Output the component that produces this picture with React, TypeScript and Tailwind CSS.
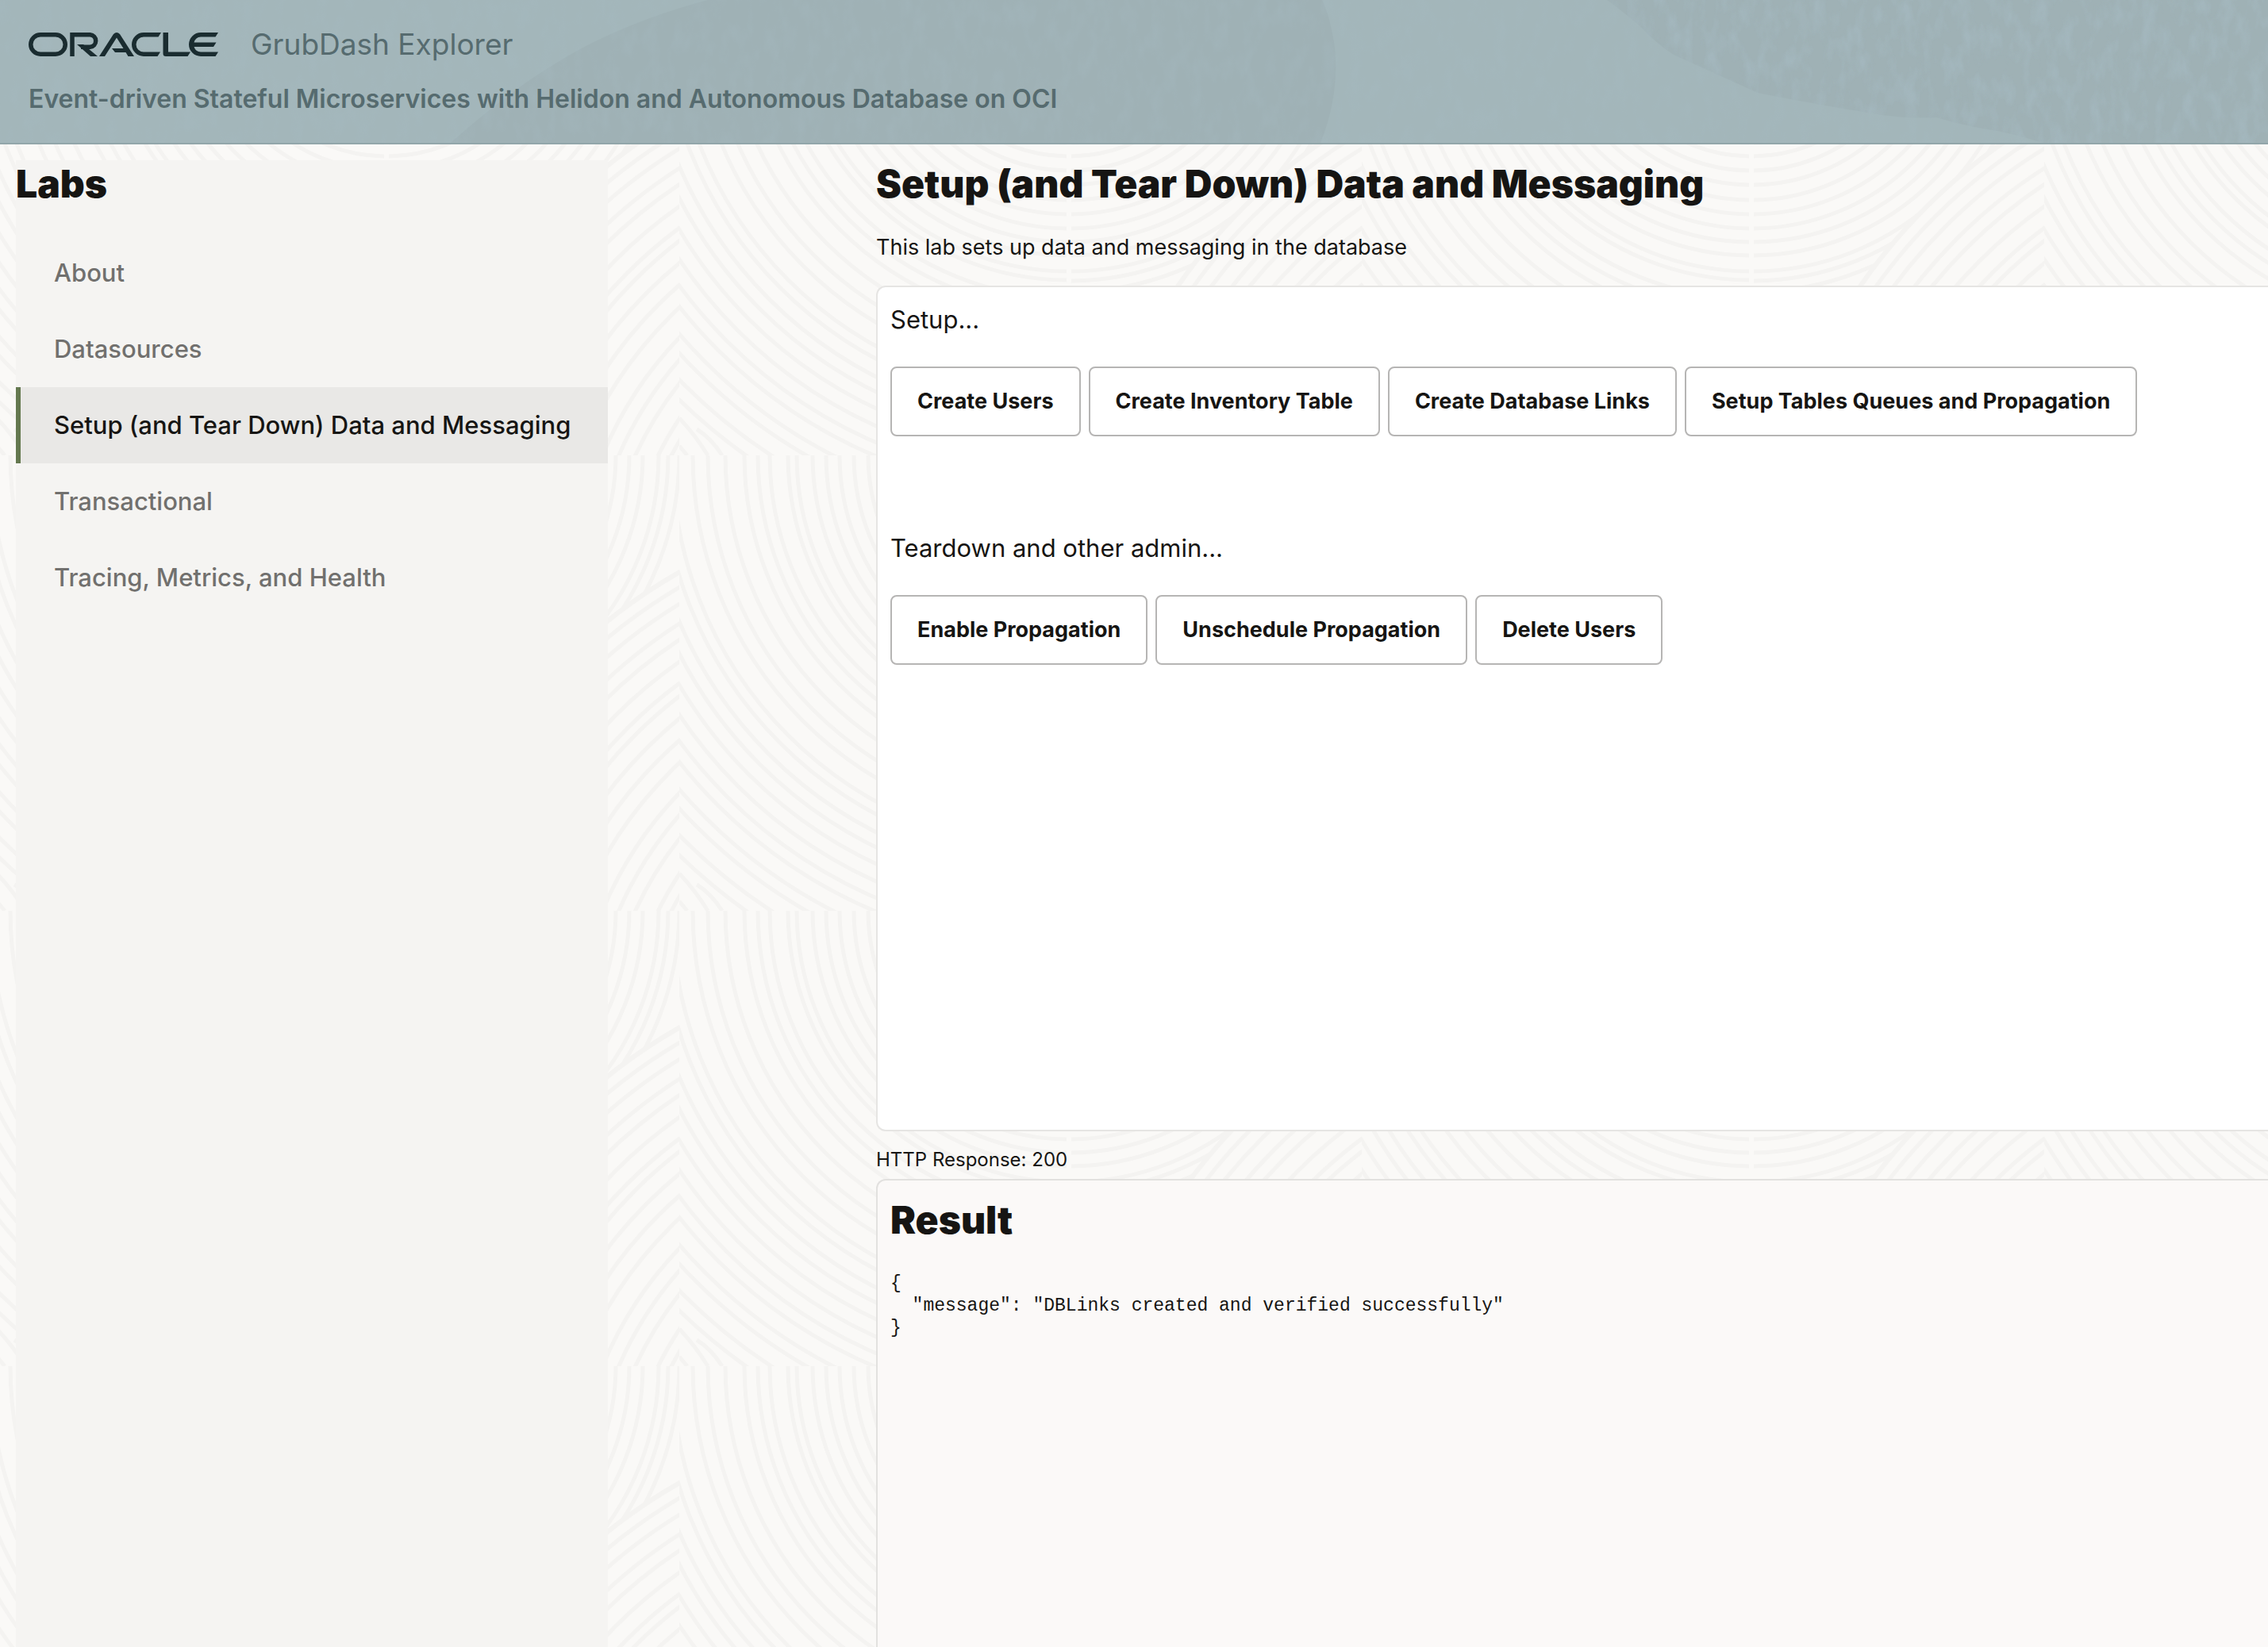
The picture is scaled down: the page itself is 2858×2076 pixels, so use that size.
import React from "react";

const labs = [
  "About",
  "Datasources",
  "Setup (and Tear Down) Data and Messaging",
  "Transactional",
  "Tracing, Metrics, and Health",
];
const activeLab = 2;

const setupActions = [
  "Create Users",
  "Create Inventory Table",
  "Create Database Links",
  "Setup Tables Queues and Propagation",
];
const teardownActions = ["Enable Propagation", "Unschedule Propagation", "Delete Users"];

const result = { message: "DBLinks created and verified successfully" };

// Ring radii around the bowl at (490, 0) of a pattern tile.
const bowlRings = [
  20, 38, 56, 74, 92, 110, 128, 146, 163, 180, 197, 215, 233, 252, 270, 288, 305, 322, 342,
];
const outerBowlRings = [
  353, 376, 391, 408, 432, 454, 473, 499, 513, 533, 550, 569, 589, 608, 624, 646, 662, 685, 703,
];
// Heights at which the hill lines reach the right edge of a tile.
const hillHeights = [
  148, 167, 187, 212, 233, 260, 287, 304, 332, 359, 387, 425, 454, 484, 527, 557,
];

function WavePattern() {
  return (
    <svg aria-hidden="true" className="absolute inset-0 -z-10 h-full w-full">
      <defs>
        <clipPath id="left-half">
          <rect x="0" y="0" width="488" height="574" />
        </clipPath>
        <clipPath id="right-half">
          <rect x="494" y="0" width="366" height="574" />
        </clipPath>
        <pattern id="waves" x="-4" y="-182" width="860" height="574" patternUnits="userSpaceOnUse">
          <g fill="none" stroke="#f4f3f1" strokeWidth="5">
            <g clipPath="url(#left-half)">
              {[...bowlRings, ...outerBowlRings].map((r) => (
                <circle key={r} cx="490" cy="0" r={r} />
              ))}
              <path d="M0 527Q20 548 36 574M0 562L10 574M22 541Q40 552 54 574" />
            </g>
            <g clipPath="url(#right-half)">
              {[...bowlRings, 354, 368].map((r) => (
                <circle key={r} cx="492" cy="0" r={r} />
              ))}
              <circle cx="1210" cy="760" r="706" fill="#faf9f7" />
              {hillHeights.map((y) => (
                <circle key={y} cx="1210" cy="760" r={Math.round(Math.hypot(350, 760 - y))} />
              ))}
            </g>
          </g>
        </pattern>
      </defs>
      <rect width="100%" height="100%" fill="url(#waves)" />
    </svg>
  );
}

function HeaderTexture() {
  return (
    <svg
      aria-hidden="true"
      className="absolute inset-0 -z-10 h-full w-full"
      viewBox="0 0 2858 180"
      preserveAspectRatio="xMidYMid slice"
    >
      <defs>
        <filter
          id="grain"
          x="0"
          y="0"
          width="100%"
          height="100%"
          colorInterpolationFilters="sRGB"
        >
          <feTurbulence type="fractalNoise" baseFrequency="0.06 0.03" numOctaves="3" seed="4" />
          <feColorMatrix values="0 0 0 0 0.65  0 0 0 0 0.73  0 0 0 0 0.76  2.4 0 0 0 -1" />
        </filter>
        <clipPath id="rock">
          <path d="M2025 0Q2050 18 2070 36Q2086 54 2109 69Q2160 92 2215 117Q2290 132 2372 145Q2410 150 2440 148Q2480 160 2517 165Q2550 172 2573 180H2858V0Z" />
        </clipPath>
      </defs>
      <g fill="#9fb1b5">
        <path d="M568 180Q640 116 700 80Q780 30 892 0H1666Q1676 20 1682 60Q1688 120 1664 180Z" />
        <rect width="2858" height="180" clipPath="url(#rock)" />
      </g>
      <rect width="2858" height="180" filter="url(#grain)" opacity="0.3" />
      <g clipPath="url(#rock)">
        <rect width="2858" height="180" filter="url(#grain)" opacity="0.5" />
      </g>
    </svg>
  );
}

function OracleLogo() {
  return (
    <svg role="img" aria-label="Oracle" viewBox="0 0 240 30" className="h-[30px] w-[240px]">
      <g fill="none" stroke="#1a2c30" strokeWidth="5.500">
        <rect x="2.750" y="2.750" width="43.500" height="24.500" rx="12.250" />
        <path d="M55 30V2.750H77.500A7.800 7.800 0 0 1 77.500 18.300H66" />
      </g>
      <g fill="#1a2c30">
        <path d="M61 15H69L87 30H78Z" />
        <path d="M89 30L107 2Q111 -2 115 2L133 30H125.500L122.500 25H109L105 20H119.500L111 6.500L96 30Z" />
        <path d="M167 0H145A15 15 0 0 0 145 30H162.500L166 24.500H145A9.500 9.500 0 0 1 145 5.500H163.500Z" />
        <path d="M169.500 0H176V24.500H204L200.500 30H173Q169.500 30 169.500 26.500Z" />
        <path d="M239 0H217A15 15 0 0 0 217 30H235.500L239 24.500H217A9.500 9.500 0 0 1 208.500 18H233L236.500 12.500H208.500A9.500 9.500 0 0 1 217 5.500H235.500Z" />
      </g>
    </svg>
  );
}

function ActionRow({ heading, actions }: { heading: string; actions: string[] }) {
  return (
    <section className="h-72">
      <h2 className="text-[31px] leading-[42px]">{heading}</h2>
      <div className="mt-[38px] flex gap-[10px]">
        {actions.map((label) => (
          <button
            key={label}
            type="button"
            className="h-[88px] rounded-lg border-2 border-[#b6b5b4] bg-white px-8 text-[27px] leading-10 font-bold whitespace-nowrap"
          >
            {label}
          </button>
        ))}
      </div>
    </section>
  );
}

export default function App() {
  return (
    <div className="flex h-screen flex-col overflow-hidden bg-[#faf9f7] font-['Inter',sans-serif] text-[#161513]">
      <header className="relative isolate h-[182px] shrink-0 border-b-2 border-[#92a6aa] bg-[#a3b6ba] px-9 pt-8">
        <HeaderTexture />
        <div className="flex h-12 items-center gap-10">
          <OracleLogo />
          <span className="text-[37px] leading-[48px] text-[#566b6f]">GrubDash Explorer</span>
        </div>
        <p className="mt-6 text-[32px] leading-[42px] font-semibold text-[#566b6f]">
          Event-driven Stateful Microservices with Helidon and Autonomous Database on OCI
        </p>
      </header>

      <div className="relative isolate flex flex-1 gap-[338px] pl-5">
        <WavePattern />
        <aside className="mt-5 w-[746px] shrink-0 bg-[#f5f4f2]">
          <h2 className="pt-[2px] text-[48px] leading-[56px] font-black">Labs</h2>
          <nav aria-label="Labs" className="mt-9">
            {labs.map((lab, i) => (
              <a
                key={lab}
                href="#"
                aria-current={i === activeLab ? "page" : undefined}
                className={
                  i === activeLab
                    ? "flex h-24 items-center border-l-6 border-[#64784f] bg-[#e9e8e6] pl-[42px] text-[31px] font-medium whitespace-nowrap"
                    : "flex h-24 items-center border-l-6 border-transparent pl-[42px] text-[31px] font-medium whitespace-nowrap text-[#71706e]"
                }
              >
                {lab}
              </a>
            ))}
          </nav>
        </aside>

        <main className="flex min-w-0 flex-1 flex-col pt-[22px]">
          <h1 className="text-[48px] leading-[56px] font-black">
            Setup (and Tear Down) Data and Messaging
          </h1>
          <p className="mt-[34px] text-[27px] leading-[36px]">
            This lab sets up data and messaging in the database
          </p>
          <div className="mt-[30px] h-[1066px] shrink-0 rounded-l-xl border-2 border-r-0 border-[#e6e5e3] bg-white px-4 pt-5">
            <ActionRow heading="Setup..." actions={setupActions} />
            <ActionRow heading="Teardown and other admin..." actions={teardownActions} />
          </div>
          <p className="mt-5 mb-2 text-[24px] leading-[32px]">HTTP Response: 200</p>
          <section className="flex-1 rounded-tl-xl border-t-2 border-l-2 border-[#e2e1df] bg-[#fbf9f8] px-4 pt-[22px]">
            <h2 className="text-[48px] leading-[56px] font-black">Result</h2>
            <pre className="mt-[38px] font-['Liberation_Mono',monospace] text-[23px] leading-[28px]">
              {JSON.stringify(result, null, 2)}
            </pre>
          </section>
        </main>
      </div>
    </div>
  );
}
